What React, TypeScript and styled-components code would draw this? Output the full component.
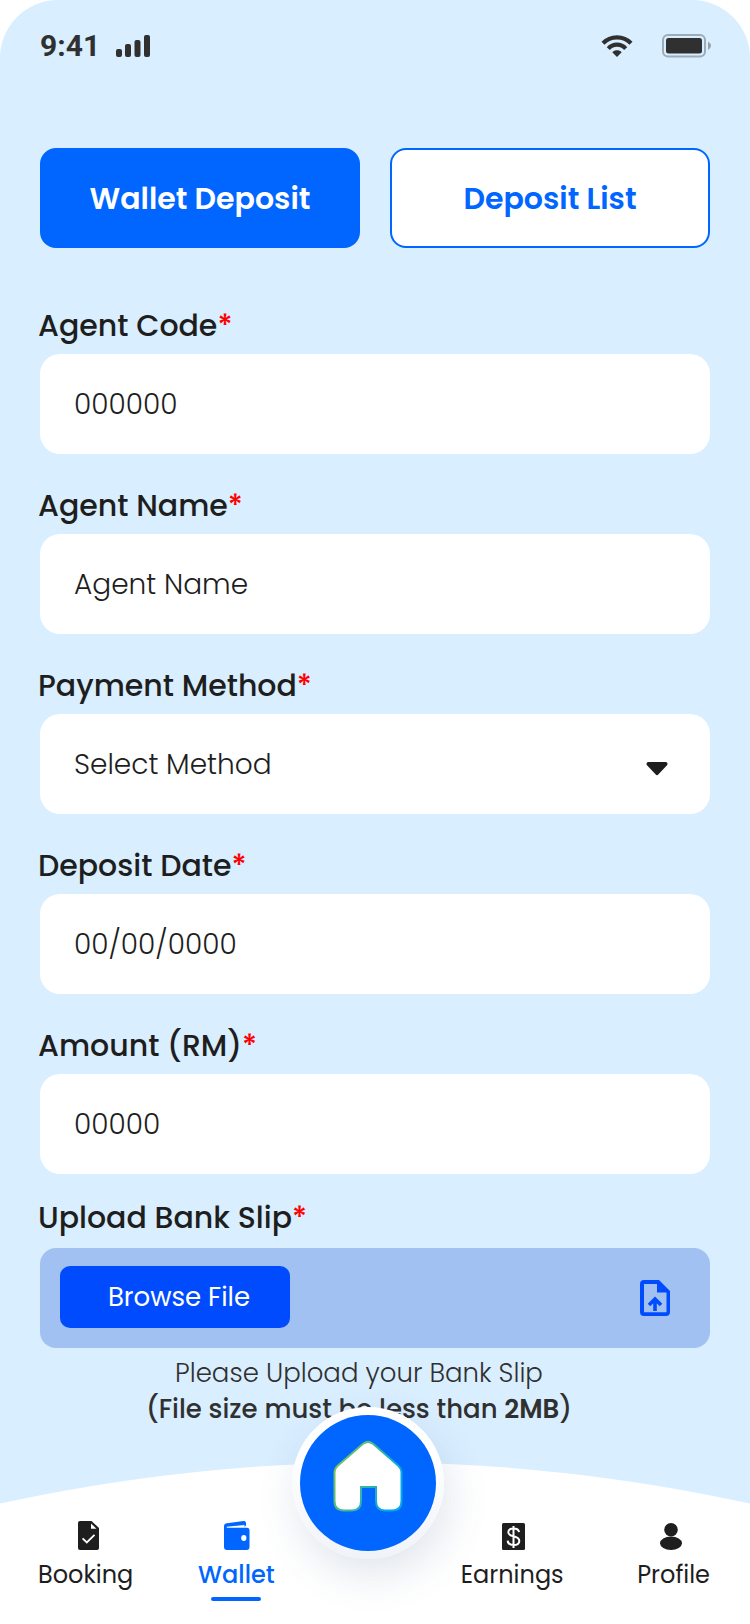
import React from "react";
import styled, { createGlobalStyle } from "styled-components";

const color = {
  sky: "#d9eeff",
  primary: "#0066ff",
  accent: "#004bfe",
  slip: "#a2c1f3",
  ink: "#1e1e1e",
  soft: "#303030",
  required: "#ff0000",
};

const GlobalStyle = createGlobalStyle`
  *, *::before, *::after { box-sizing: border-box; }
  body {
    margin: 0;
    background: #ffffff;
    color: ${color.ink};
    font-family: Poppins, Inter, "Liberation Sans", sans-serif;
  }
  button, input, select { font-family: inherit; }
`;

const Screen = styled.div`
  display: flex;
  flex-direction: column;
  min-height: 100vh;
  background: ${color.sky};
  border-radius: 58px 58px 0 0;
`;

const StatusBar = styled.header`
  display: flex;
  align-items: center;
  justify-content: space-between;
  height: 92px;
  padding: 0 38px 0 40px;
`;

const StatusGroup = styled.div<{ $gap: number }>`
  display: flex;
  align-items: center;
  gap: ${(p) => p.$gap}px;
`;

const Clock = styled.time`
  font: 700 30px/36px Roboto, sans-serif;
  color: ${color.soft};
`;

const Main = styled.main`
  flex: 1;
  padding: 56px 40px 35px;
`;

const Tabs = styled.div`
  display: grid;
  grid-template-columns: 1fr 1fr;
  gap: 30px;
`;

const Tab = styled.button<{ $active?: boolean }>`
  height: 100px;
  padding: 2px 0 0;
  border: 2px solid ${color.primary};
  border-radius: 16px;
  background: ${(p) => (p.$active ? color.primary : "#ffffff")};
  color: ${(p) => (p.$active ? "#ffffff" : color.primary)};
  font-size: 30px;
  font-weight: 600;
  cursor: pointer;
`;

const Form = styled.form`
  display: flex;
  flex-direction: column;
  gap: 32px;
  margin-top: 58px;
`;

const FieldGroup = styled.div`
  display: flex;
  flex-direction: column;
  gap: 8px;
`;

const UploadGroup = styled(FieldGroup)`
  gap: 10px;
  margin-top: 24px;
`;

const Label = styled.label`
  margin-left: -2px;
  font-size: 30px;
  font-weight: 500;
  line-height: 40px;
`;

const Required = styled.span`
  color: ${color.required};
`;

const Input = styled.input`
  width: 100%;
  height: 100px;
  padding: 2px 34px 0;
  border: 0;
  border-radius: 20px;
  background: #ffffff;
  color: ${color.ink};
  font-size: 28px;
  font-weight: 300;

  &::placeholder {
    color: ${color.ink};
    opacity: 1;
  }
`;

const SelectWrap = styled.div`
  position: relative;
`;

const Select = styled(Input).attrs({ as: "select" })`
  display: block;
  padding: 0 34px;
  appearance: none;
`;

const Caret = styled.svg`
  position: absolute;
  top: 48px;
  right: 42px;
  pointer-events: none;
`;

const SlipBox = styled.div`
  display: flex;
  align-items: center;
  justify-content: space-between;
  height: 100px;
  padding: 0 40px 0 20px;
  border-radius: 16px;
  background: ${color.slip};
`;

const BrowseButton = styled.button`
  align-self: flex-start;
  width: 230px;
  height: 62px;
  margin-top: 18px;
  padding: 0 0 0 8px;
  border: 0;
  border-radius: 10px;
  background: ${color.accent};
  color: #ffffff;
  font-size: 26px;
  font-weight: 400;
  cursor: pointer;
`;

const Hint = styled.p<{ $strong?: boolean }>`
  margin: 0;
  padding-right: 32px;
  color: ${color.soft};
  font-size: 26px;
  font-weight: ${(p) => (p.$strong ? 500 : 300)};
  line-height: 36px;
  text-align: center;
`;

const Hints = styled.div`
  margin-top: 7px;
`;

const Limit = styled.b`
  font-weight: 600;
`;

const BottomNav = styled.nav`
  position: relative;
  display: grid;
  grid-template-columns: 19fr 152px 20fr;
  column-gap: 17px;
  align-items: start;
  height: 162px;
  padding: 0 40px 0 38px;
`;

const Hill = styled.svg`
  position: absolute;
  inset: 0;
  width: 100%;
  height: 100%;
`;

const NavGroup = styled.div`
  position: relative;
  display: flex;
  justify-content: space-between;
  padding-top: 58px;
`;

const NavLink = styled.a<{ $active?: boolean }>`
  display: flex;
  flex-direction: column;
  align-items: center;
  color: ${(p) => (p.$active ? color.primary : color.ink)};
  font-size: 24px;
  font-weight: ${(p) => (p.$active ? 500 : 400)};
  line-height: 36px;
  text-decoration: none;

  svg { margin-bottom: 7px; }

  &::after {
    content: "";
    width: 50px;
    height: 4px;
    margin-top: 4px;
    border-radius: 2px;
    background: ${(p) => (p.$active ? color.primary : "transparent")};
  }
`;

const HomeButton = styled.button`
  position: relative;
  display: grid;
  place-items: center;
  width: 152px;
  height: 152px;
  margin-top: -55px;
  padding: 0 0 14px;
  border: 8px solid transparent;
  border-radius: 50%;
  background:
    linear-gradient(${color.primary}, ${color.primary}) padding-box,
    linear-gradient(#ffffff 30%, #f0f3f8) border-box;
  box-shadow: 5px 16px 40px rgba(70, 100, 140, 0.16);
  cursor: pointer;
`;

const SignalIcon = () => (
  <svg width="34" height="22" viewBox="0 0 34 22" fill={color.soft} aria-hidden="true">
    <rect x="0" y="14" width="6" height="8" rx="2" />
    <rect x="9" y="9" width="6" height="13" rx="2" />
    <rect x="18.500" y="5" width="6" height="17" rx="2" />
    <rect x="28" y="0" width="6" height="22" rx="2" />
  </svg>
);

const WifiIcon = () => (
  <svg width="32" height="22" viewBox="0 0 32 22" aria-hidden="true">
    <g fill="none" stroke={color.soft} strokeWidth="4.200">
      <path d="M2 8.200 C9.500 0.300 22.500 0.300 30 8.200" />
      <path d="M7.300 13.600 C12 8.400 20 8.400 24.700 13.600" />
    </g>
    <path d="M11.300 17.300 C14 14.700 18 14.700 20.700 17.300 L16 22 Z" fill={color.soft} />
  </svg>
);

const BatteryIcon = () => (
  <svg width="50" height="24" viewBox="0 0 50 24" aria-hidden="true">
    <rect x="1" y="1" width="42" height="21.500" rx="5" fill="none" stroke={color.soft} strokeOpacity="0.350" strokeWidth="2" />
    <rect x="4" y="4" width="36" height="15.500" rx="2.500" fill={color.soft} />
    <path d="M46 7.500 Q49 9.500 49 11.750 Q49 14 46 16 Z" fill={color.soft} fillOpacity="0.400" />
  </svg>
);

const UploadIcon = () => (
  <svg width="30" height="36" viewBox="0 0 30 36" aria-hidden="true">
    <path
      fill={color.accent}
      fillRule="evenodd"
      d="M4 0 H19 L30 11 V32 Q30 36 26 36 H4 Q0 36 0 32 V4 Q0 0 4 0 Z M4 4 V32.300 H26.500 V12.500 H17 V4 Z"
    />
    <path fill="none" stroke={color.accent} strokeWidth="3.600" d="M15 31 V19 M9 25 L15 19 L21 25" />
  </svg>
);

const BookingIcon = () => (
  <svg width="27" height="30" viewBox="-6 0 27 30" aria-hidden="true">
    <path fill={color.ink} d="M2 1 H13.500 L21 8 V28 Q21 30 19 30 H2 Q0 30 0 28 V3 Q0 1 2 1 Z" />
    <path fill="#ffffff" d="M13 3.500 V8.700 H18.500 Z" />
    <path fill="none" stroke="#ffffff" strokeWidth="1.800" d="M4.600 18.300 L8.800 22.500 L16.500 14.800" />
  </svg>
);

const WalletIcon = () => (
  <svg width="28" height="30" viewBox="-2 0 28 30" aria-hidden="true">
    <path fill={color.primary} d="M0 6 Q0 3.700 3 3.200 L19.500 1 Q22 0.800 22 3 V5.600 L20.500 7 V5 L2.500 6.800 L3 7.700 H23 Q25.500 7.700 25.500 10.200 V27 Q25.500 30 22.500 30 H3 Q0 30 0 27 Z" />
    <ellipse cx="19.800" cy="18" rx="2.600" ry="3" fill="#ffffff" />
  </svg>
);

const EarningsIcon = () => (
  <svg width="25" height="30" viewBox="-2 0 25 30" aria-hidden="true">
    <rect y="3" width="23" height="27" rx="1.500" fill={color.ink} />
    <path
      fill="none"
      stroke="#ffffff"
      strokeWidth="2"
      d="M17 12.200 C16.700 9.800 14.500 8.600 11.500 8.600 C8.300 8.600 6.300 10 6.300 12.300 C6.300 14.500 8 15.500 11.500 16.300 C15.300 17.200 17.300 18.300 17.300 20.900 C17.300 23.500 15 25 11.600 25 C8 25 5.900 23.400 5.700 20.600 M11.500 6 V28"
    />
  </svg>
);

const ProfileIcon = () => (
  <svg width="28" height="30" viewBox="0 0 28 30" fill={color.ink} aria-hidden="true">
    <circle cx="11" cy="9.800" r="6.800" />
    <ellipse cx="11" cy="23.300" rx="11" ry="6.700" />
  </svg>
);

const HomeIcon = () => (
  <svg width="70" height="72" viewBox="0 0 70 72" aria-hidden="true">
    <defs>
      <linearGradient id="homeEdge" x1="0" y1="0" x2="1" y2="0.500">
        <stop offset="0" stopColor="#8cc63f" />
        <stop offset="1" stopColor="#00a9e8" />
      </linearGradient>
    </defs>
    <path
      fill="#ffffff"
      stroke="url(#homeEdge)"
      strokeWidth="2"
      d="M1.500 33 Q1.500 28.500 5 25.500 L30 3.800 Q35 0 40 3.800 L65 25.500 Q68.500 28.500 68.500 33 V61 Q68.500 70.500 59 70.500 H52 Q43 70.500 43 61 V47 H28 V61 Q28 70.500 19 70.500 H11 Q1.500 70.500 1.500 61 Z"
    />
  </svg>
);

type FieldLabelProps = { htmlFor: string; children: React.ReactNode };

const FieldLabel = ({ htmlFor, children }: FieldLabelProps) => (
  <Label htmlFor={htmlFor}>
    {children}
    <Required>*</Required>
  </Label>
);

type TextFieldProps = { id: string; label: string; placeholder: string; numeric?: boolean };

const TextField = ({ id, label, placeholder, numeric }: TextFieldProps) => (
  <FieldGroup>
    <FieldLabel htmlFor={id}>{label}</FieldLabel>
    <Input id={id} type="text" inputMode={numeric ? "numeric" : "text"} placeholder={placeholder} required />
  </FieldGroup>
);

export default function App() {
  return (
    <>
      <GlobalStyle />
      <Screen>
        <StatusBar>
          <StatusGroup $gap={16}>
            <Clock>9:41</Clock>
            <SignalIcon />
          </StatusGroup>
          <StatusGroup $gap={29}>
            <WifiIcon />
            <BatteryIcon />
          </StatusGroup>
        </StatusBar>

        <Main>
          <Tabs>
            <Tab type="button" $active>Wallet Deposit</Tab>
            <Tab type="button">Deposit List</Tab>
          </Tabs>

          <Form>
            <TextField id="agent-code" label="Agent Code" placeholder="000000" numeric />
            <TextField id="agent-name" label="Agent Name" placeholder="Agent Name" />
            <FieldGroup>
              <FieldLabel htmlFor="method">Payment Method</FieldLabel>
              <SelectWrap>
                <Select id="method">
                  <option>Select Method</option>
                </Select>
                <Caret width="22" height="14" viewBox="0 0 22 14" aria-hidden="true">
                  <path fill={color.ink} d="M2 0 H20 Q22.500 1 21 3.300 L12.500 12.300 Q11 14 9.500 12.300 L1 3.300 Q-0.500 1 2 0 Z" />
                </Caret>
              </SelectWrap>
            </FieldGroup>
            <TextField id="deposit-date" label="Deposit Date" placeholder="00/00/0000" numeric />
            <TextField id="amount" label="Amount (RM)" placeholder="00000" numeric />
          </Form>

          <UploadGroup>
            <FieldLabel htmlFor="bank-slip">Upload Bank Slip</FieldLabel>
            <SlipBox>
              <BrowseButton id="bank-slip" type="button">Browse File</BrowseButton>
              <UploadIcon />
            </SlipBox>
          </UploadGroup>
          <Hints>
            <Hint>Please Upload your Bank Slip</Hint>
            <Hint $strong>
              (File size must be less than <Limit>2MB</Limit>)
            </Hint>
          </Hints>
        </Main>

        <BottomNav>
          <Hill viewBox="0 0 750 162" preserveAspectRatio="none" aria-hidden="true">
            <path fill="#ffffff" d="M0 41.500 Q375 -40.500 750 41.500 V162 H0 Z" />
          </Hill>
          <NavGroup>
            <NavLink href="#booking"><BookingIcon />Booking</NavLink>
            <NavLink href="#wallet" $active><WalletIcon />Wallet</NavLink>
          </NavGroup>
          <HomeButton type="button" aria-label="Home">
            <HomeIcon />
          </HomeButton>
          <NavGroup>
            <NavLink href="#earnings"><EarningsIcon />Earnings</NavLink>
            <NavLink href="#profile"><ProfileIcon />Profile</NavLink>
          </NavGroup>
        </BottomNav>
      </Screen>
    </>
  );
}
